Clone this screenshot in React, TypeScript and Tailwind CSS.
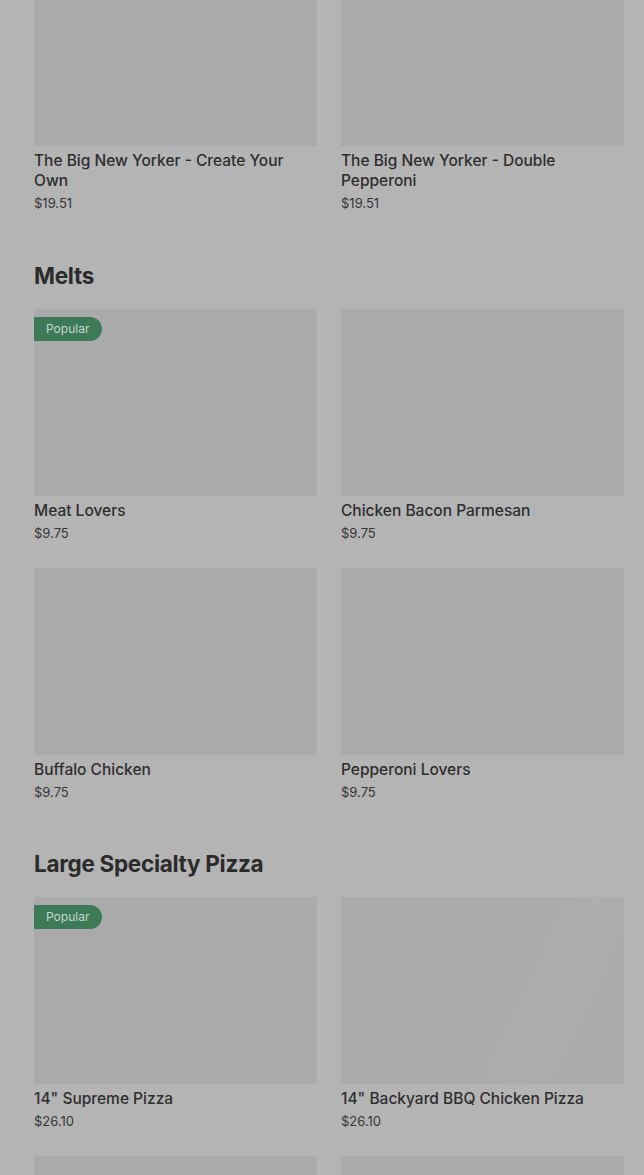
import React from 'react';

type Item = {
  name?: string;
  price?: string;
  popular?: boolean;
  shimmer?: boolean;
};

type Section = {
  title?: string;
  items: Item[];
};

const sections: Section[] = [
  {
    items: [
      { name: 'The Big New Yorker - Create Your Own', price: '$19.51' },
      { name: 'The Big New Yorker - Double Pepperoni', price: '$19.51' },
    ],
  },
  {
    title: 'Melts',
    items: [
      { name: 'Meat Lovers', price: '$9.75', popular: true },
      { name: 'Chicken Bacon Parmesan', price: '$9.75' },
      { name: 'Buffalo Chicken', price: '$9.75' },
      { name: 'Pepperoni Lovers', price: '$9.75' },
    ],
  },
  {
    title: 'Large Specialty Pizza',
    items: [
      { name: '14" Supreme Pizza', price: '$26.10', popular: true },
      { name: '14" Backyard BBQ Chicken Pizza', price: '$26.10', shimmer: true },
      {},
      {},
    ],
  },
];

const MenuCard: React.FC<{ item: Item }> = ({ item }) => {
  return (
    <div className="flex flex-col">
      <div
        className={
          item.shimmer
            ? 'relative h-[187px] bg-[linear-gradient(115deg,#aaaaaa_55%,#adadad_70%,#aaaaaa_88%)]'
            : 'relative h-[187px] bg-[#aaaaaa]'
        }
      >
        {item.popular && (
          <span className="absolute left-0 top-[8px] flex h-[24px] items-center rounded-r-full bg-[#3d7a58] pl-[12px] pr-[13px] text-[12px] text-[#c3d6ca]">
            Popular
          </span>
        )}
      </div>
      {item.name && (
        <>
          <h3 className="mt-[5px] text-[15.5px] leading-[20px] font-medium text-[#2e2e2e]">
            {item.name}
          </h3>
          <p className="mt-[2px] text-[13px] leading-[20px] text-[#363636]">
            {item.price}
          </p>
        </>
      )}
    </div>
  );
};

const App: React.FC = () => {
  return (
    <div className="h-[1175px] overflow-hidden bg-[#b4b4b4] font-['Inter',sans-serif]">
      <div className="-mt-[41px] pl-[34px] pr-[20px]">
        {sections.map((section, i) => (
          <section
            key={i}
            className={i === 0 ? '' : i === 1 ? 'mt-[47px]' : 'mt-[46px]'}
          >
            {section.title && (
              <h2 className="mb-[17px] text-[22.5px] leading-[32px] font-bold tracking-[-0.3px] text-[#2b2b2b]">
                {section.title}
              </h2>
            )}
            <div className="grid grid-cols-2 gap-x-[24px] gap-y-[25px]">
              {section.items.map((item, j) => (
                <MenuCard key={j} item={item} />
              ))}
            </div>
          </section>
        ))}
      </div>
    </div>
  );
};

export default App;
